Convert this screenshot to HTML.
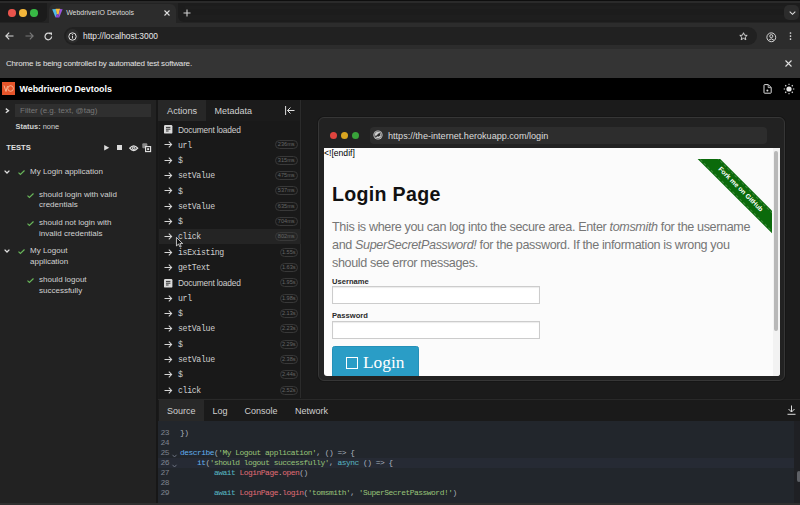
<!DOCTYPE html>
<html><head><meta charset="utf-8">
<style>
*{margin:0;padding:0;box-sizing:border-box}
html,body{width:800px;height:505px;overflow:hidden;background:#1a1a1a;font-family:"Liberation Sans",sans-serif}
.a{position:absolute}
.mono{font-family:"Liberation Mono",monospace}
.t{white-space:nowrap;line-height:1}
svg{position:absolute;overflow:visible}
.row{position:absolute;left:159px;width:142px;height:15px}
.ar{position:absolute;left:164px;width:9px;height:8px}
.rt{position:absolute;left:178px;margin-top:.2px;white-space:nowrap;line-height:1;font-family:"Liberation Mono",monospace;font-size:8.2px;letter-spacing:-.32px;color:#cfcfcf}
.dt{position:absolute;left:178px;margin-top:0px;white-space:nowrap;line-height:1;font-size:8.4px;letter-spacing:-.2px;color:#cfcfcf}
.pill{position:absolute;right:502px;height:9px;border:1px solid #383838;border-radius:5px;font-size:5.6px;line-height:7px;color:#666;padding:0;text-align:center;white-space:nowrap}
.ln{position:absolute;left:160.5px;width:12px;font-family:"Liberation Mono",monospace;font-size:8px;letter-spacing:-.55px;margin-top:-1.1px;line-height:1;color:#7d838e;white-space:nowrap}
.code{position:absolute;left:180px;font-family:"Liberation Mono",monospace;font-size:7.9px;letter-spacing:-.48px;margin-top:-1.1px;line-height:1;color:#abb2bf;white-space:pre}
.k{color:#56b6c2}.f{color:#61afef}.s{color:#98c379}.r{color:#e06c75}
.st{position:absolute;margin-top:.7px;white-space:nowrap;line-height:1;font-size:8px;color:#d2d2d2}
</style></head><body>

<!-- ===== Chrome tab strip ===== -->
<div class="a" style="left:0;top:0;width:800px;height:25px;background:#232323"></div>
<div class="a" style="left:0;top:3.3px;width:47px;height:19.2px;background:#1b1b1b;border-radius:0 0 6px 0"></div>
<div class="a" style="left:0;top:0;width:800px;height:1.3px;background:#0e0e0e"></div>
<div class="a" style="left:0;top:1.3px;width:800px;height:1.8px;background:#2a2a2a"></div>
<div class="a" style="left:178px;top:3.3px;width:622px;height:19.2px;background:#1c1c1c;border-radius:0 0 0 6px"></div>
<div class="a" style="left:185px;top:5.5px;width:615px;height:3.5px;background:#1e1e1e"></div>
<div class="a" style="left:185px;top:15px;width:615px;height:5px;background:#1e1e1e"></div>
<div class="a" style="left:8.4px;top:9.2px;width:7.4px;height:7.4px;border-radius:50%;background:#e9544c"></div>
<div class="a" style="left:19.4px;top:9.2px;width:7.4px;height:7.4px;border-radius:50%;background:#f2b53a"></div>
<div class="a" style="left:30.3px;top:9.2px;width:7.4px;height:7.4px;border-radius:50%;background:#38b845"></div>
<!-- active tab -->
<div class="a" style="left:49px;top:4px;width:127px;height:22px;background:#2c2c2c;border-radius:6px 6px 0 0"></div>
<svg style="left:52px;top:7.5px" width="11" height="10" viewBox="0 0 11 10"><path d="M0.2 1.2L4 1L5 6L3.5 9.5Z" fill="#4fb8e8"/><path d="M3.6 0.8L8.2 0.8L6.5 7L5 6Z" fill="#f7bd3a"/><path d="M8 1L10.6 1.3L7.2 9.5L6.5 7Z" fill="#9b55dc"/><path d="M3.5 9.5L5 6L6.5 7L7.2 9.5Z" fill="#8a45d8"/></svg>
<div class="a t" style="left:66.2px;top:10.4px;font-size:6.95px;color:#dedede">WebdriverIO Devtools</div>
<svg style="left:164px;top:10px" width="6" height="6" viewBox="0 0 6 6"><path d="M0.5 0.5L5.5 5.5M5.5 0.5L0.5 5.5" stroke="#e0e0e0" stroke-width="1.1"/></svg>
<svg style="left:183px;top:9px" width="8" height="8" viewBox="0 0 8 8"><path d="M4 0.5V7.5M0.5 4H7.5" stroke="#d0d0d0" stroke-width="1.1"/></svg>
<!-- expand tab button -->
<div class="a" style="left:784px;top:5px;width:15px;height:15px;border-radius:5px;background:#2c2c2c"></div>
<svg style="left:788.5px;top:10.5px" width="7" height="4" viewBox="0 0 7 4"><path d="M0.7 0.7L3.5 3.3L6.3 0.7" stroke="#ddd" stroke-width="1.1" fill="none"/></svg>

<!-- ===== Toolbar ===== -->
<div class="a" style="left:0;top:23px;width:800px;height:26px;background:#2c2c2c"></div>
<svg style="left:5px;top:32px" width="9" height="8" viewBox="0 0 9 8"><path d="M8.5 4H1M4.2 0.7L0.9 4L4.2 7.3" stroke="#d8d8d8" stroke-width="1.2" fill="none"/></svg>
<svg style="left:25px;top:32px" width="9" height="8" viewBox="0 0 9 8"><path d="M0.5 4H8M4.8 0.7L8.1 4L4.8 7.3" stroke="#777" stroke-width="1.2" fill="none"/></svg>
<svg style="left:44px;top:32px" width="9" height="9" viewBox="0 0 9 9"><path d="M7.6 4.5A3.3 3.3 0 1 1 6.6 2.1" stroke="#d8d8d8" stroke-width="1.2" fill="none"/><path d="M5 0.6L8 0.6L8 3.6Z" fill="#d8d8d8"/></svg>
<div class="a" style="left:64px;top:27px;width:693px;height:18px;border-radius:9px;background:#212121"></div>
<div class="a" style="left:66px;top:29px;width:13px;height:14px;border-radius:7px;background:#2c2c2c"></div>
<svg style="left:68px;top:32px" width="9" height="9" viewBox="0 0 9 9"><circle cx="4.5" cy="4.5" r="3.7" stroke="#dcdcdc" stroke-width="1" fill="none"/><path d="M4.5 3.8V6.6" stroke="#dcdcdc" stroke-width="1"/><circle cx="4.5" cy="2.6" r=".6" fill="#dcdcdc"/></svg>
<div class="a t" style="left:83px;top:32px;font-size:8.4px;color:#e8e8e8">http://localhost:3000</div>
<svg style="left:738.9px;top:31.9px" width="9" height="9" viewBox="0 0 10 10"><path d="M5 0.8L6.2 3.6L9.1 3.8L6.9 5.7L7.6 8.6L5 7L2.4 8.6L3.1 5.7L0.9 3.8L3.8 3.6Z" stroke="#e0e0e0" stroke-width="1" fill="none" stroke-linejoin="round"/></svg>
<svg style="left:765.5px;top:31.6px" width="10.6" height="10.6" viewBox="0 0 11 11"><circle cx="5.5" cy="5.5" r="4.6" stroke="#d8d8d8" stroke-width="1" fill="none"/><circle cx="5.5" cy="4.3" r="1.6" stroke="#d8d8d8" stroke-width="1" fill="none"/><path d="M2.6 8.6Q5.5 5.6 8.4 8.6" stroke="#d8d8d8" stroke-width="1" fill="none"/></svg>
<svg style="left:789.2px;top:32px" width="3" height="10" viewBox="0 0 3 10"><circle cx="1.5" cy="1" r=".85" fill="#ddd"/><circle cx="1.5" cy="4.1" r=".85" fill="#ddd"/><circle cx="1.5" cy="7.1" r=".85" fill="#ddd"/></svg>

<!-- ===== Info bar ===== -->
<div class="a" style="left:0;top:48.5px;width:800px;height:29.5px;background:#343434"></div>
<div class="a t" style="left:6px;top:59.8px;font-size:8px;letter-spacing:-.18px;color:#e3e3e3">Chrome is being controlled by automated test software.</div>
<svg style="left:785px;top:60px" width="7" height="7" viewBox="0 0 7 7"><path d="M0.5 0.5L6.5 6.5M6.5 0.5L0.5 6.5" stroke="#e0e0e0" stroke-width="1.1"/></svg>

<!-- ===== App header ===== -->
<div class="a" style="left:0;top:78px;width:800px;height:21.7px;background:#000"></div>
<div class="a" style="left:2px;top:82px;width:13px;height:13px;background:#e5542a"></div>
<svg style="left:2px;top:82px" width="13" height="13" viewBox="0 0 13 13"><path d="M2 3.5L4 9.5L5.5 4" stroke="#f7c6a8" stroke-width=".8" fill="none"/><circle cx="8.6" cy="6.5" r="2.8" stroke="#f7c6a8" stroke-width=".8" fill="none"/></svg>
<div class="a t" style="left:19.6px;top:84.7px;font-size:8.85px;font-weight:bold;color:#fff">WebdriverIO Devtools</div>
<svg style="left:763px;top:84px" width="9" height="10" viewBox="0 0 9 10"><path d="M1 1.2Q1 0.6 1.6 0.6H5.3L8.2 3.5V8.6Q8.2 9.2 7.6 9.2H1.6Q1 9.2 1 8.6Z" stroke="#dcdcdc" stroke-width="1" fill="none"/><path d="M5.2 0.8V3.6H8" stroke="#dcdcdc" stroke-width=".8" fill="none"/><circle cx="4.4" cy="6.6" r="1" fill="#dcdcdc"/></svg>
<svg style="left:782.7px;top:82.9px" width="12" height="12" viewBox="0 0 12 12"><circle cx="6" cy="6" r="2.6" fill="#e8e8e8"/><path d="M9.90 6.00L11.30 6.00M8.76 8.76L9.75 9.75M6.00 9.90L6.00 11.30M3.24 8.76L2.25 9.75M2.10 6.00L0.70 6.00M3.24 3.24L2.25 2.25M6.00 2.10L6.00 0.70M8.76 3.24L9.75 2.25" stroke="#d8d8d8" stroke-width="1.1"/></svg>

<!-- ===== Left sidebar ===== -->
<div class="a" style="left:0;top:99.7px;width:157px;height:406px;background:#222222"></div>
<div class="a" style="left:156px;top:99.7px;width:2px;height:406px;background:#171717"></div>
<svg style="left:4.6px;top:107.9px" width="4.5" height="5.4" viewBox="0 0 4.5 5.4"><path d="M0.8 0.6L3.5 2.7L0.8 4.8" stroke="#e0e0e0" stroke-width="1.35" fill="none"/></svg>
<div class="a" style="left:15px;top:104px;width:136px;height:13px;background:#2f2f2f"></div>
<div class="a t" style="left:20px;top:107px;font-size:8px;color:#777">Filter (e.g. text, @tag)</div>
<div class="a t" style="left:15.6px;top:123.2px;font-size:7.4px;color:#d0d0d0"><b>Status:</b> none</div>
<div class="a t" style="left:6.2px;top:144.2px;font-size:7.6px;font-weight:bold;color:#e0e0e0;letter-spacing:.05px">TESTS</div>
<svg style="left:103.7px;top:144.9px" width="5.4" height="5.6" viewBox="0 0 5.4 5.6"><path d="M0.2 0.1L5.3 2.8L0.2 5.5Z" fill="#dcdcdc"/></svg>
<div class="a" style="left:116.7px;top:144.9px;width:5.3px;height:5.2px;background:#dcdcdc"></div>
<svg style="left:128.6px;top:144.6px" width="9.4" height="6.4" viewBox="0 0 9.4 6.4"><path d="M0.7 3.2Q4.7 -1.6 8.7 3.2Q4.7 8 0.7 3.2Z" stroke="#e0e0e0" stroke-width="1.3" fill="none"/><circle cx="4.7" cy="3.2" r="1.7" fill="#e0e0e0"/><ellipse cx="4.7" cy="3.2" rx=".9" ry=".6" fill="#333"/></svg>
<svg style="left:141.8px;top:143.4px" width="9" height="9" viewBox="0 0 9 9"><rect x="0.3" y="0.3" width="5" height="5" rx="1" fill="#8a8a8a"/><rect x="3.6" y="3.6" width="5" height="5" stroke="#e6e6e6" stroke-width="1.1" fill="#222"/><rect x="5.2" y="5.2" width="1.9" height="1.9" fill="#e6e6e6"/></svg>
<!-- test tree -->
<svg style="left:4.3px;top:169.7px" width="6" height="4" viewBox="0 0 6 4"><path d="M0.6 0.6L3 3L5.4 0.6" stroke="#e0e0e0" stroke-width="1.3" fill="none"/></svg>
<svg style="left:18px;top:169.6px" width="7" height="5" viewBox="0 0 7 5"><path d="M0.5 2.6L2.4 4.4L6.5 0.5" stroke="#69b65a" stroke-width="1.2" fill="none"/></svg>
<div class="st" style="left:30px;top:167px">My Login application</div>
<svg style="left:27px;top:192.6px" width="7" height="5" viewBox="0 0 7 5"><path d="M0.5 2.6L2.4 4.4L6.5 0.5" stroke="#69b65a" stroke-width="1.2" fill="none"/></svg>
<div class="st" style="left:39px;top:190px">should login with valid</div>
<div class="st" style="left:39px;top:200px">credentials</div>
<svg style="left:27px;top:220.6px" width="7" height="5" viewBox="0 0 7 5"><path d="M0.5 2.6L2.4 4.4L6.5 0.5" stroke="#69b65a" stroke-width="1.2" fill="none"/></svg>
<div class="st" style="left:39px;top:218px">should not login with</div>
<div class="st" style="left:39px;top:229px">invalid credentials</div>
<svg style="left:4.3px;top:248.7px" width="6" height="4" viewBox="0 0 6 4"><path d="M0.6 0.6L3 3L5.4 0.6" stroke="#e0e0e0" stroke-width="1.3" fill="none"/></svg>
<svg style="left:18px;top:248.6px" width="7" height="5" viewBox="0 0 7 5"><path d="M0.5 2.6L2.4 4.4L6.5 0.5" stroke="#69b65a" stroke-width="1.2" fill="none"/></svg>
<div class="st" style="left:30px;top:246px">My Logout</div>
<div class="st" style="left:30px;top:257px">application</div>
<svg style="left:27px;top:277.6px" width="7" height="5" viewBox="0 0 7 5"><path d="M0.5 2.6L2.4 4.4L6.5 0.5" stroke="#69b65a" stroke-width="1.2" fill="none"/></svg>
<div class="st" style="left:39px;top:275px">should logout</div>
<div class="st" style="left:39px;top:286px">successfully</div>

<!-- ===== Actions panel ===== -->
<div class="a" style="left:158px;top:99.7px;width:143px;height:299px;background:#1b1b1b"></div>
<div class="a" style="left:158px;top:100px;width:48px;height:21.2px;background:#272727"></div>
<div class="a t" style="left:167px;top:107px;font-size:9.2px;color:#cfcfcf">Actions</div>
<div class="a t" style="left:214.6px;top:107px;font-size:9px;color:#cfcfcf">Metadata</div>
<svg style="left:285px;top:106px" width="10" height="9" viewBox="0 0 10 9"><path d="M0.6 0V9" stroke="#ddd" stroke-width="1"/><path d="M9.5 4.5H2.5M5.5 1.5L2.5 4.5L5.5 7.5" stroke="#ddd" stroke-width="1" fill="none"/></svg>
<div class="a" style="left:159px;top:121px;width:142px;height:277px;background:#191919"></div>
<div class="a" style="left:300px;top:99.7px;width:1px;height:299px;background:#2b2b2b"></div>
<!-- hover row -->
<div class="a" style="left:159px;top:229px;width:142px;height:15px;background:#242424"></div>

<div id="actions"></div>
<svg style="left:164px;top:125.4px" width="8.4" height="8.6" viewBox="0 0 8.4 8.6"><rect x="0" y="0" width="8.4" height="8.6" rx="1.2" fill="#dadada"/><path d="M2 2.4H6.4M2 4.2H6.4M2 6H4.6" stroke="#2a2a2a" stroke-width=".95"/></svg>
<div class="dt" style="top:125.6px">Document loaded</div>
<svg style="left:164px;top:141.4px" width="9" height="7" viewBox="0 0 9 7"><path d="M0.5 3.5H7.6M4.8 0.7L7.6 3.5L4.8 6.3" stroke="#d8d8d8" stroke-width="1.05" fill="none"/></svg>
<div class="rt" style="top:141.4px">url</div>
<div class="pill" style="top:140.4px;width:23.5px">236ms</div>
<svg style="left:164px;top:156.7px" width="9" height="7" viewBox="0 0 9 7"><path d="M0.5 3.5H7.6M4.8 0.7L7.6 3.5L4.8 6.3" stroke="#d8d8d8" stroke-width="1.05" fill="none"/></svg>
<div class="rt" style="top:156.7px">$</div>
<div class="pill" style="top:155.7px;width:23.5px">315ms</div>
<svg style="left:164px;top:172.1px" width="9" height="7" viewBox="0 0 9 7"><path d="M0.5 3.5H7.6M4.8 0.7L7.6 3.5L4.8 6.3" stroke="#d8d8d8" stroke-width="1.05" fill="none"/></svg>
<div class="rt" style="top:172.1px">setValue</div>
<div class="pill" style="top:171.1px;width:23.5px">475ms</div>
<svg style="left:164px;top:187.4px" width="9" height="7" viewBox="0 0 9 7"><path d="M0.5 3.5H7.6M4.8 0.7L7.6 3.5L4.8 6.3" stroke="#d8d8d8" stroke-width="1.05" fill="none"/></svg>
<div class="rt" style="top:187.4px">$</div>
<div class="pill" style="top:186.4px;width:23.5px">537ms</div>
<svg style="left:164px;top:202.7px" width="9" height="7" viewBox="0 0 9 7"><path d="M0.5 3.5H7.6M4.8 0.7L7.6 3.5L4.8 6.3" stroke="#d8d8d8" stroke-width="1.05" fill="none"/></svg>
<div class="rt" style="top:202.7px">setValue</div>
<div class="pill" style="top:201.7px;width:23.5px">635ms</div>
<svg style="left:164px;top:218.0px" width="9" height="7" viewBox="0 0 9 7"><path d="M0.5 3.5H7.6M4.8 0.7L7.6 3.5L4.8 6.3" stroke="#d8d8d8" stroke-width="1.05" fill="none"/></svg>
<div class="rt" style="top:218.0px">$</div>
<div class="pill" style="top:217.0px;width:23.5px">704ms</div>
<svg style="left:164px;top:233.3px" width="9" height="7" viewBox="0 0 9 7"><path d="M0.5 3.5H7.6M4.8 0.7L7.6 3.5L4.8 6.3" stroke="#d8d8d8" stroke-width="1.05" fill="none"/></svg>
<div class="rt" style="top:233.3px">click</div>
<div class="pill" style="top:232.3px;width:23.5px">802ms</div>
<svg style="left:164px;top:248.7px" width="9" height="7" viewBox="0 0 9 7"><path d="M0.5 3.5H7.6M4.8 0.7L7.6 3.5L4.8 6.3" stroke="#d8d8d8" stroke-width="1.05" fill="none"/></svg>
<div class="rt" style="top:248.7px">isExisting</div>
<div class="pill" style="top:247.7px;width:18.4px">1.55s</div>
<svg style="left:164px;top:264.0px" width="9" height="7" viewBox="0 0 9 7"><path d="M0.5 3.5H7.6M4.8 0.7L7.6 3.5L4.8 6.3" stroke="#d8d8d8" stroke-width="1.05" fill="none"/></svg>
<div class="rt" style="top:264.0px">getText</div>
<div class="pill" style="top:263.0px;width:18.4px">1.63s</div>
<svg style="left:164px;top:278.6px" width="8.4" height="8.6" viewBox="0 0 8.4 8.6"><rect x="0" y="0" width="8.4" height="8.6" rx="1.2" fill="#dadada"/><path d="M2 2.4H6.4M2 4.2H6.4M2 6H4.6" stroke="#2a2a2a" stroke-width=".95"/></svg>
<div class="dt" style="top:278.8px">Document loaded</div>
<div class="pill" style="top:278.3px;width:18.4px">1.95s</div>
<svg style="left:164px;top:294.6px" width="9" height="7" viewBox="0 0 9 7"><path d="M0.5 3.5H7.6M4.8 0.7L7.6 3.5L4.8 6.3" stroke="#d8d8d8" stroke-width="1.05" fill="none"/></svg>
<div class="rt" style="top:294.6px">url</div>
<div class="pill" style="top:293.6px;width:18.4px">1.98s</div>
<svg style="left:164px;top:309.9px" width="9" height="7" viewBox="0 0 9 7"><path d="M0.5 3.5H7.6M4.8 0.7L7.6 3.5L4.8 6.3" stroke="#d8d8d8" stroke-width="1.05" fill="none"/></svg>
<div class="rt" style="top:309.9px">$</div>
<div class="pill" style="top:308.9px;width:18.4px">2.13s</div>
<svg style="left:164px;top:325.3px" width="9" height="7" viewBox="0 0 9 7"><path d="M0.5 3.5H7.6M4.8 0.7L7.6 3.5L4.8 6.3" stroke="#d8d8d8" stroke-width="1.05" fill="none"/></svg>
<div class="rt" style="top:325.3px">setValue</div>
<div class="pill" style="top:324.3px;width:18.4px">2.23s</div>
<svg style="left:164px;top:340.6px" width="9" height="7" viewBox="0 0 9 7"><path d="M0.5 3.5H7.6M4.8 0.7L7.6 3.5L4.8 6.3" stroke="#d8d8d8" stroke-width="1.05" fill="none"/></svg>
<div class="rt" style="top:340.6px">$</div>
<div class="pill" style="top:339.6px;width:18.4px">2.29s</div>
<svg style="left:164px;top:355.9px" width="9" height="7" viewBox="0 0 9 7"><path d="M0.5 3.5H7.6M4.8 0.7L7.6 3.5L4.8 6.3" stroke="#d8d8d8" stroke-width="1.05" fill="none"/></svg>
<div class="rt" style="top:355.9px">setValue</div>
<div class="pill" style="top:354.9px;width:18.4px">2.38s</div>
<svg style="left:164px;top:371.2px" width="9" height="7" viewBox="0 0 9 7"><path d="M0.5 3.5H7.6M4.8 0.7L7.6 3.5L4.8 6.3" stroke="#d8d8d8" stroke-width="1.05" fill="none"/></svg>
<div class="rt" style="top:371.2px">$</div>
<div class="pill" style="top:370.2px;width:18.4px">2.44s</div>
<svg style="left:164px;top:386.5px" width="9" height="7" viewBox="0 0 9 7"><path d="M0.5 3.5H7.6M4.8 0.7L7.6 3.5L4.8 6.3" stroke="#d8d8d8" stroke-width="1.05" fill="none"/></svg>
<div class="rt" style="top:386.5px">click</div>
<div class="pill" style="top:385.5px;width:18.4px">2.52s</div>
<!--/actions-end-->

<!-- ===== Browser preview ===== -->
<div class="a" style="left:302px;top:99.7px;width:498px;height:299px;background:#1b1b1b"></div>
<div class="a" style="left:318px;top:117.2px;width:467.2px;height:263.8px;background:#222;border:1px solid #363636;border-radius:6px;box-shadow:0 0 0 1px #161616"></div>
<div class="a" style="left:330px;top:132px;width:7px;height:7px;border-radius:50%;background:#e0443e"></div>
<div class="a" style="left:341px;top:132px;width:7px;height:7px;border-radius:50%;background:#d9a520"></div>
<div class="a" style="left:352px;top:132px;width:7px;height:7px;border-radius:50%;background:#39a33a"></div>
<div class="a" style="left:370px;top:127px;width:397px;height:17px;border-radius:4px;background:#2d2d2d"></div>
<svg style="left:373px;top:130.2px" width="10" height="10" viewBox="0 0 10 10"><circle cx="5" cy="5" r="4.6" fill="#d2d2d2"/><circle cx="5" cy="5" r="3.7" fill="none" stroke="#2d2d2d" stroke-width=".5"/><path d="M1.6 6.2Q2.6 5.2 3.8 5.6L5 3.8L7.6 2.8Q7 4.4 7.4 6Q6.6 5.4 5.8 6.8Q5.2 6 4.2 6.6Q3 7.4 1.6 6.2Z" fill="#2a2a2a"/></svg>
<div class="a t" style="left:388px;top:132px;font-size:9.1px;color:#dcdcdc">https://the-internet.herokuapp.com/login</div>

<div class="a" style="left:324px;top:148px;width:456px;height:228px;background:#fbfbfb;border-radius:0 0 3px 3px;overflow:hidden">
  <div class="a t" style="left:0;top:1px;font-size:8.6px;color:#000">&lt;![endif]</div>
  <!-- ribbon -->
  <div class="a" style="left:367.5px;top:10.5px;width:80px;height:80px;overflow:hidden">
    <div class="a" style="left:-26.05px;top:23.15px;width:150px;height:15.8px;background:#0b6a0b;transform:rotate(45deg);transform-origin:50% 50%">
      <div style="position:absolute;left:0;right:0;top:1.2px;bottom:1.2px;border-top:1px dashed rgba(255,255,255,.2);border-bottom:1px dashed rgba(255,255,255,.2)"></div>
      <div class="t" style="position:absolute;left:0;right:0;top:4.3px;text-align:center;font-size:6.7px;font-weight:bold;color:#fff">Fork me on GitHub</div>
    </div>
  </div>
  <!-- scrollbar -->
  <div class="a" style="left:449px;top:0;width:7px;height:228px;background:#f2f2f2"></div>
  <div class="a" style="left:450px;top:3px;width:4px;height:180px;border-radius:2px;background:#b8b8b8"></div>

  <div class="a t" style="left:8px;top:37px;font-size:19.6px;font-weight:bold;color:#111;letter-spacing:.3px">Login Page</div>
  <div class="a" style="left:8px;top:71px;width:440px;font-size:12.6px;line-height:17.8px;color:#767676;letter-spacing:-.37px;white-space:nowrap">This is where you can log into the secure area. Enter <i>tomsmith</i> for the username<br>and <i>SuperSecretPassword!</i> for the password. If the information is wrong you<br>should see error messages.</div>
  <div class="a t" style="left:8px;top:129.5px;font-size:7.6px;font-weight:bold;color:#2a2a2a">Username</div>
  <div class="a" style="left:8px;top:138px;width:208px;height:18.2px;background:#fff;border:1px solid #cccccc;box-shadow:inset 0 1px 1px rgba(0,0,0,.08)"></div>
  <div class="a t" style="left:8px;top:164px;font-size:7.6px;font-weight:bold;color:#2a2a2a">Password</div>
  <div class="a" style="left:8px;top:172.6px;width:208px;height:18.1px;background:#fff;border:1px solid #cccccc;box-shadow:inset 0 1px 1px rgba(0,0,0,.08)"></div>
  <div class="a" style="left:8px;top:198.3px;width:86.5px;height:40px;background:#2a9dc6;border:1px solid #2590b8;border-radius:2.5px"></div>
  <div class="a" style="left:22.1px;top:208.9px;width:11.9px;height:11.9px;border:1.8px solid #fff"></div>
  <div class="a t" style="left:39px;top:206.2px;font-family:'Liberation Serif',serif;font-size:17.4px;color:#fff">Login</div>
</div>

<!-- ===== Bottom panel ===== -->
<div class="a" style="left:158px;top:398px;width:642px;height:107px;background:#1a1a1a"></div>
<div class="a" style="left:158px;top:398.5px;width:642px;height:1.5px;background:#292929"></div>
<div class="a" style="left:159px;top:400px;width:45px;height:20.5px;background:#282828"></div>
<div class="a t" style="left:167px;top:407px;font-size:9px;color:#d0d0d0">Source</div>
<div class="a t" style="left:212.5px;top:407px;font-size:9px;color:#d0d0d0">Log</div>
<div class="a t" style="left:244.5px;top:407px;font-size:9px;color:#d0d0d0">Console</div>
<div class="a t" style="left:295px;top:407px;font-size:9px;color:#d0d0d0">Network</div>
<svg style="left:787px;top:405px" width="9" height="10" viewBox="0 0 9 10"><path d="M4.5 0.5V7M1.5 4L4.5 7L7.5 4M0.5 9.3H8.5" stroke="#ddd" stroke-width="1" fill="none"/></svg>
<div class="a" style="left:158px;top:421px;width:642px;height:84px;background:#22262c"></div>
<div class="a" style="left:158px;top:458.2px;width:636px;height:9.8px;background:#262a34"></div>
<div class="a" style="left:794px;top:421px;width:6px;height:82px;background:#1f2024"></div>
<div class="a" style="left:796.5px;top:471px;width:4px;height:11px;border-radius:2px;background:#5e6066"></div>

<div class="ln" style="top:430.5px">23</div><div class="code" style="top:430.5px">})</div>
<div class="ln" style="top:440.5px">24</div>
<div class="ln" style="top:450.5px">25</div><div class="code" style="top:450.5px"><span class="f">describe</span>(<span class="s">'My Logout application'</span>, () =&gt; {</div>
<div class="ln" style="top:460.5px">26</div><div class="code" style="top:460.5px">    <span class="f">it</span>(<span class="s">'should logout successfully'</span>, <span class="k">async</span> () =&gt; {</div>
<div class="ln" style="top:470.5px">27</div><div class="code" style="top:470.5px">        <span class="k">await</span> <span class="r">LoginPage</span>.<span class="r">open</span>()</div>
<div class="ln" style="top:480.5px">28</div>
<div class="ln" style="top:490.5px">29</div><div class="code" style="top:490.5px">        <span class="k">await</span> <span class="r">LoginPage</span>.<span class="r">login</span>(<span class="s">'tomsmith'</span>, <span class="s">'SuperSecretPassword!'</span>)</div>
<svg style="left:172px;top:453.5px" width="5" height="4" viewBox="0 0 5 4"><path d="M0.5 0.8L2.5 3L4.5 0.8" stroke="#7a8090" stroke-width=".8" fill="none"/></svg>
<svg style="left:172px;top:463.5px" width="5" height="4" viewBox="0 0 5 4"><path d="M0.5 0.8L2.5 3L4.5 0.8" stroke="#7a8090" stroke-width=".8" fill="none"/></svg>

<!-- mouse cursor -->
<svg style="left:175.9px;top:236.8px" width="7.2" height="10.8" viewBox="0 0 8 12"><path d="M0.5 0.5V10L2.8 7.8L4.4 11.2L5.8 10.6L4.3 7.3H7.4Z" fill="#111" stroke="#fff" stroke-width=".8" stroke-linejoin="round"/></svg>

<div class="a" style="left:0;top:503px;width:800px;height:2px;background:#2f2f2f"></div>
</body></html>
